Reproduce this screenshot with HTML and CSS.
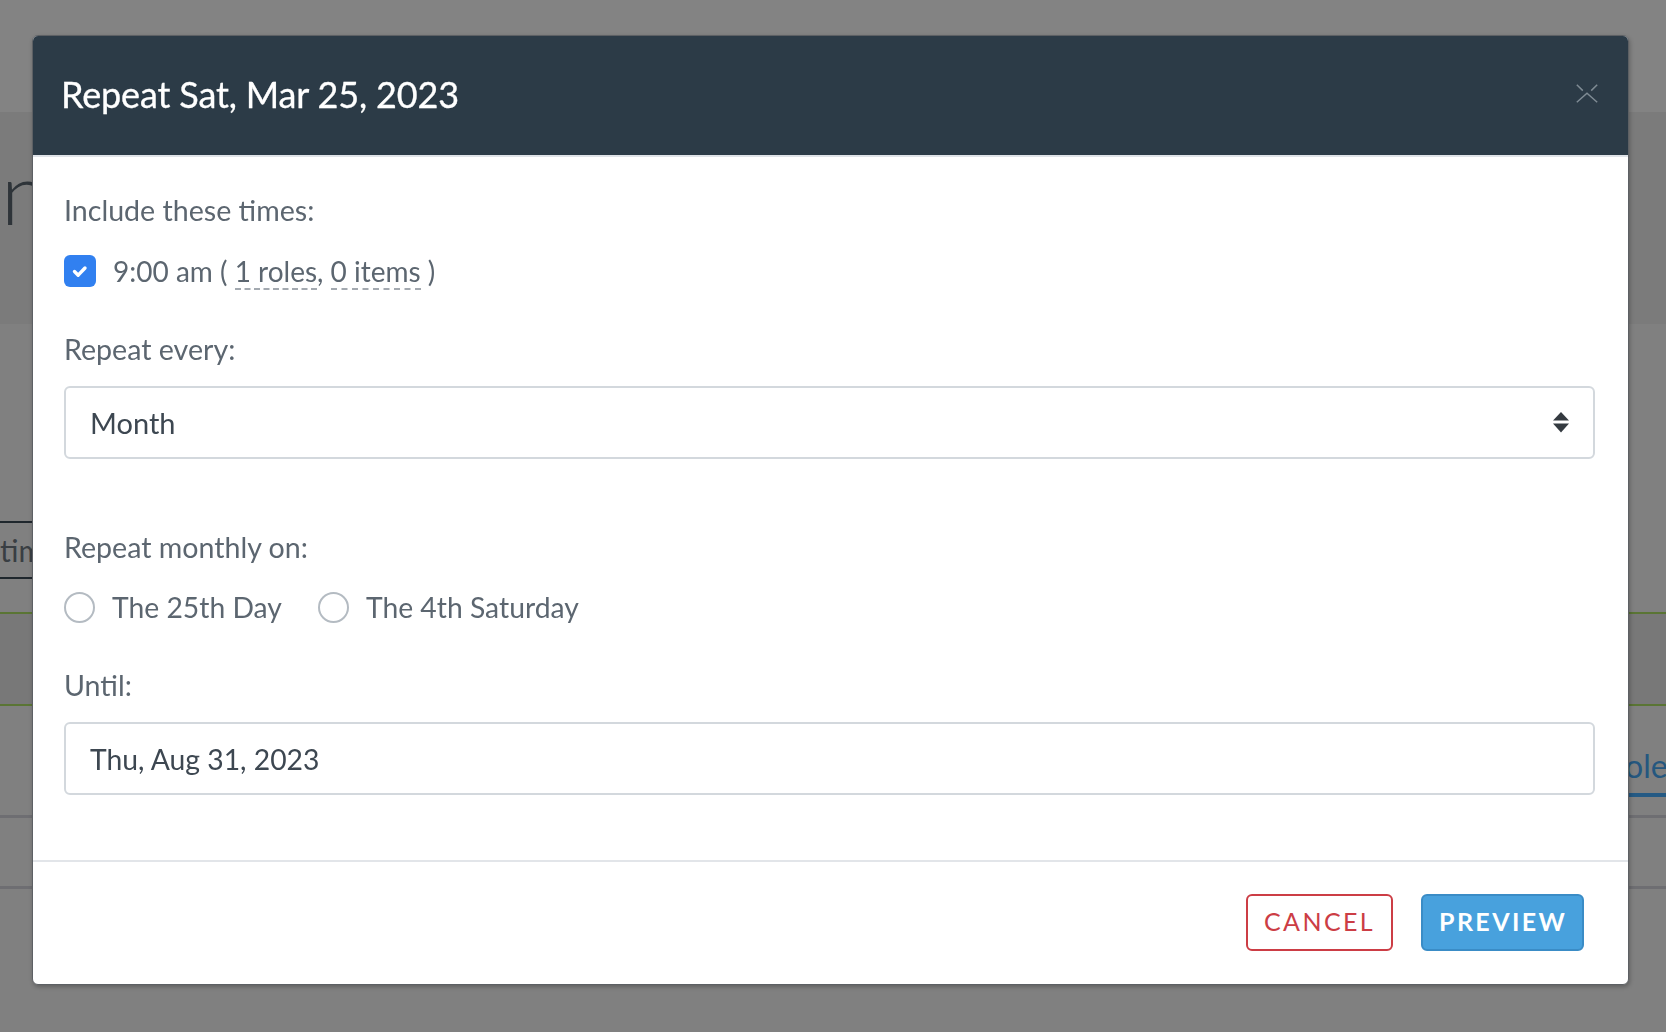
FILE: index.html
```html
<!DOCTYPE html>
<html lang="en">
<head>
<meta charset="utf-8">
<title>Repeat Sat, Mar 25, 2023</title>
<link rel="stylesheet" href="styles.css">
</head>
<body>
<div class="page">
  <div class="nav"></div>
  <div class="hero"><h1 class="hero-title">n</h1></div>
  <div class="spacer"></div>
  <div class="tabs"><span class="tab-text">times</span></div>
  <div class="gap"></div>
  <div class="band"></div>
  <div class="tabs2"><span class="tab2">Roles</span></div>
  <div class="rule rule-a"></div>
  <div class="rule rule-b"></div>
</div>

<div class="modal" role="dialog" aria-labelledby="modal-title">
  <div class="modal-header">
    <h2 class="modal-title" id="modal-title">Repeat Sat, Mar 25, 2023</h2>
    <button class="close" aria-label="Close">
      <svg width="22" height="19" viewBox="0 0 22 19"><path d="M0.8 0.8 L6.8 6.6 M21.2 0.8 L15.2 6.6 M0.8 18.2 L11 9.2 L21.2 18.2" fill="none" stroke="#7f8b94" stroke-width="1.5"/></svg>
    </button>
  </div>
  <div class="modal-body">
    <div class="label">Include these times:</div>
    <div class="check-row">
      <span class="checkbox"><svg width="32" height="32" viewBox="0 0 32 32"><polyline points="10.5,16.5 14.2,20.2 21,13" fill="none" stroke="#fff" stroke-width="3.4" stroke-linecap="round" stroke-linejoin="round"/></svg></span>
      <span class="opt-text">9:00 am ( <span class="dashed">1 roles</span>, <span class="dashed">0 items</span> )</span>
    </div>

    <div class="label label-gap">Repeat every:</div>
    <div class="select">
      <span>Month</span>
      <svg class="arrows" width="16" height="21" viewBox="0 0 16 21"><polygon points="0,8.5 8,0 16,8.5" fill="#343a40"/><polygon points="0,11.5 16,11.5 8,20.5" fill="#343a40"/></svg>
    </div>

    <div class="label label-gap-lg">Repeat monthly on:</div>
    <div class="radio-row">
      <label class="radio-opt"><span class="radio"></span><span class="opt-text radio-text">The 25th Day</span></label>
      <label class="radio-opt"><span class="radio"></span><span class="opt-text radio-text">The 4th Saturday</span></label>
    </div>

    <div class="label label-gap">Until:</div>
    <input class="text-input" type="text" value="Thu, Aug 31, 2023">
  </div>
  <div class="modal-footer">
    <button class="btn btn-cancel">CANCEL</button>
    <button class="btn btn-preview">PREVIEW</button>
  </div>
</div>
</body>
</html>
```

FILE: styles.css
```css
* { box-sizing: border-box; }

html, body {
  margin: 0;
  padding: 0;
  height: 100%;
  overflow: hidden;
}

body {
  font-family: "Lato", "Liberation Sans", sans-serif;
  background: #808080;
}

/* ---------- background page (dimmed) ---------- */
.page {
  display: flex;
  flex-direction: column;
  min-height: 100%;
  background: #808080;
}

.nav {
  height: 112px;
  background: #838383;
}

.hero {
  height: 212px;
  background: #7b7b7b;
  padding: 30px 0 0 1px;
}

.hero-title {
  margin: 0;
  font-size: 86px;
  font-weight: 300;
  line-height: 100px;
  color: #2e3439;
}

.spacer { height: 197px; }

.tabs {
  width: 300px;
  height: 58px;
  border-top: 2px solid #1f272d;
  border-bottom: 2px solid #1f272d;
  padding-top: 7px;
}

.tab-text {
  display: block;
  font-size: 30px;
  line-height: 40px;
  color: #393e43;
}

.gap { height: 33px; }

.band {
  height: 94px;
  background: #787878;
  border-top: 2px solid #5a7534;
  border-bottom: 2px solid #5a7534;
}

.tabs2 {
  height: 91px;
  display: flex;
  align-items: flex-end;
  padding-left: 1606px;
}

.tab2 {
  font-size: 32px;
  line-height: 40px;
  color: #25577f;
  padding: 0 10px 7px 0;
  border-bottom: 4px solid #255a84;
}

.rule {
  height: 3px;
  background: #6e6e72;
}
.rule-a { margin-top: 18px; }
.rule-b { margin-top: 68px; }

/* ---------- modal ---------- */
.modal {
  position: fixed;
  top: 35px;
  left: 32px;
  width: 1597px;
  background: #fff;
  border: 1px solid #5d6064;
  border-radius: 6px;
  overflow: hidden;
  box-shadow: 1px 2px 4px rgba(0, 0, 0, 0.25);
}

.modal-header {
  height: 121px;
  background: #2c3b47;
  border-bottom: 2px solid #dfe3e8;
  display: flex;
  align-items: center;
  justify-content: space-between;
  padding: 0 30px 4px 28px;
}

.modal-title {
  margin: 0;
  font-size: 36px;
  font-weight: 400;
  letter-spacing: -0.15px;
  color: #fff;
  line-height: 44px;
  -webkit-text-stroke: 0.3px #fff;
}

.close {
  border: 0;
  background: none;
  padding: 0;
  margin: 0;
  width: 22px;
  height: 19px;
  display: flex;
}

.modal-body {
  padding: 36px 33px 65px 31px;
  color: #5c6670;
}

.label {
  font-size: 28.6px;
  line-height: 34px;
  color: #5c6670;
}

.label-gap { margin-top: 44px; margin-bottom: 20px; }
.label-gap-lg { margin-top: 71px; margin-bottom: 26px; }

.label:first-child { margin-bottom: 27px; }

.check-row {
  display: flex;
  align-items: center;
  height: 34px;
  gap: 17px;
}

.checkbox {
  width: 32px;
  height: 32px;
  border-radius: 6px;
  background: #3180f0;
  display: flex;
}

.opt-text {
  font-size: 28px;
  line-height: 34px;
  color: #5c6670;
  white-space: pre;
}

.radio-text { font-size: 28.3px; }

.dashed {
  border-bottom: 2px dashed #a3a9b0;
}

.select {
  height: 73px;
  border: 2px solid #d3d8dd;
  border-radius: 6px;
  display: flex;
  align-items: center;
  justify-content: space-between;
  padding: 0 24px 0 24px;
  font-size: 29px;
  color: #3d4751;
}

.radio-row {
  display: flex;
  align-items: center;
  height: 34px;
  gap: 36px;
}

.radio-opt {
  display: flex;
  align-items: center;
  gap: 17px;
}

.radio {
  width: 31px;
  height: 31px;
  border: 2px solid #b4bbc2;
  border-radius: 50%;
  background: #fff;
}

.text-input {
  display: block;
  width: 100%;
  height: 73px;
  border: 2px solid #d3d8dd;
  border-radius: 6px;
  padding: 0 24px;
  font-family: "Lato", "Liberation Sans", sans-serif;
  font-size: 28.3px;
  color: #3d4751;
  background: #fff;
  outline: none;
  margin: 0;
}

.modal-footer {
  border-top: 2px solid #e2e5e9;
  padding: 32px 44px 33px 0;
  display: flex;
  justify-content: flex-end;
  gap: 28px;
}

.btn {
  height: 57px;
  border-radius: 6px;
  font-family: "Lato", "Liberation Sans", sans-serif;
  font-size: 25px;
  letter-spacing: 2.4px;
  padding: 0 18px 3px 16px;
  margin: 0;
  cursor: pointer;
}

.btn-cancel {
  width: 147px;
  background: #fff;
  border: 2px solid #cc3d45;
  color: #cc3d45;
  font-weight: 400;
}

.btn-preview {
  width: 163px;
  background: #48a1dd;
  border: 2px solid #3a8cc6;
  color: #fff;
  font-weight: 700;
}
```
